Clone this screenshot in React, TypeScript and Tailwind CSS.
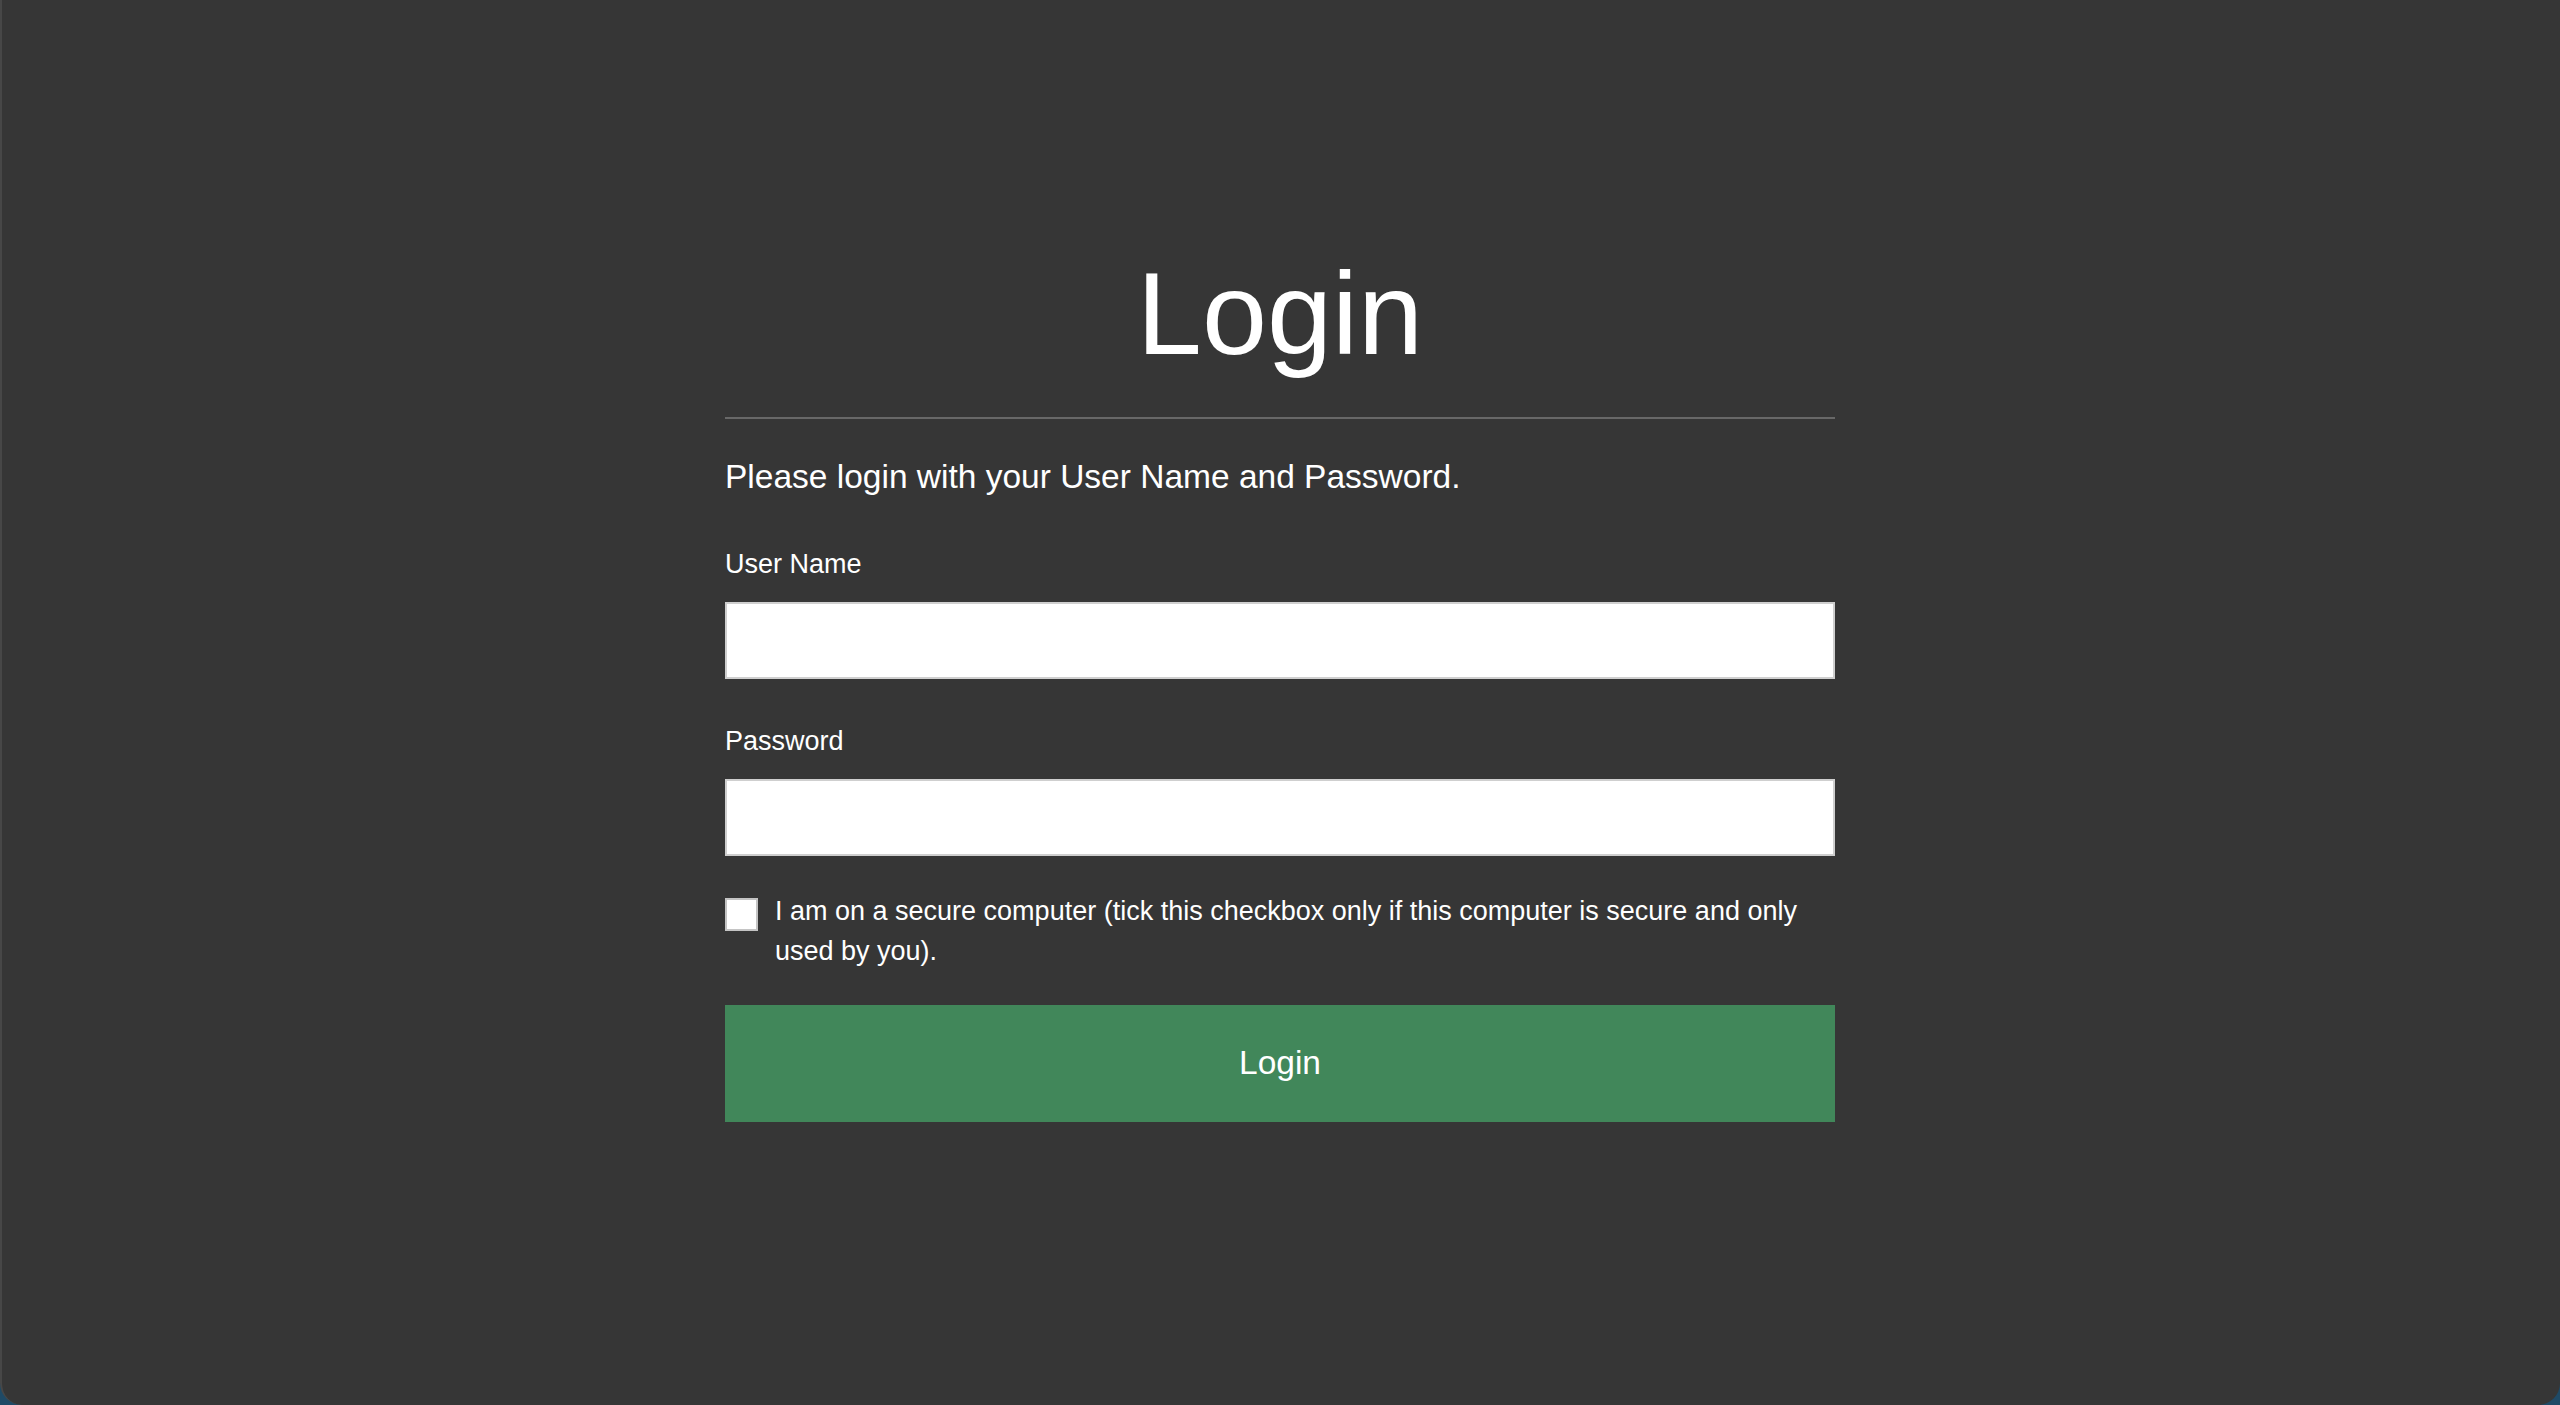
import React, { useState } from 'react';

export default function App() {
  const [user, setUser] = useState('');
  const [pass, setPass] = useState('');
  const [secure, setSecure] = useState(false);

  return (
    <div className="h-screen w-full bg-[#1f4a66] overflow-hidden" style={{ fontFamily: '"Liberation Sans", Arial, Helvetica, sans-serif' }}>
      <div className="h-full w-full bg-[#363636] rounded-b-[22px] border-l-2 border-[#474747] text-white">
        <div className="mx-auto w-[1110px] pt-[255px] -translate-x-px">
          <h1 className="text-[117px] leading-none text-center font-normal">Login</h1>
          <div className="mt-[45px] h-[2px] bg-[#686868]" />
          <p className="mt-[41px] text-[33.5px] leading-none">Please login with your User Name and Password.</p>

          <form onSubmit={(e) => e.preventDefault()}>
            <label className="block mt-[57px] text-[27px] leading-none">User Name</label>
            <input
              value={user}
              onChange={(e) => setUser(e.target.value)}
              className="block mt-[24px] w-full h-[77px] bg-white border-2 border-[#cfcfcf] text-black text-[27px] px-4 outline-none"
            />

            <label className="block mt-[49px] text-[27px] leading-none">Password</label>
            <input
              type="password"
              value={pass}
              onChange={(e) => setPass(e.target.value)}
              className="block mt-[24px] w-full h-[77px] bg-white border-2 border-[#cfcfcf] text-black text-[27px] px-4 outline-none"
            />

            <div className="mt-[35px] flex items-start gap-[17px]">
              <button
                type="button"
                onClick={() => setSecure(!secure)}
                className="mt-[7px] w-[33px] h-[33px] shrink-0 bg-white border-2 border-[#c4c4c4] text-black text-[22px] leading-none"
              >
                {secure ? '✓' : ''}
              </button>
              <span className="text-[27px] leading-[40px]">
                I am on a secure computer (tick this checkbox only if this computer is secure and only used by you).
              </span>
            </div>

            <button
              type="submit"
              className="mt-[34px] w-full h-[117px] bg-[#41875a] text-white text-[33.5px] leading-none"
            >
              Login
            </button>
          </form>
        </div>
      </div>
    </div>
  );
}
